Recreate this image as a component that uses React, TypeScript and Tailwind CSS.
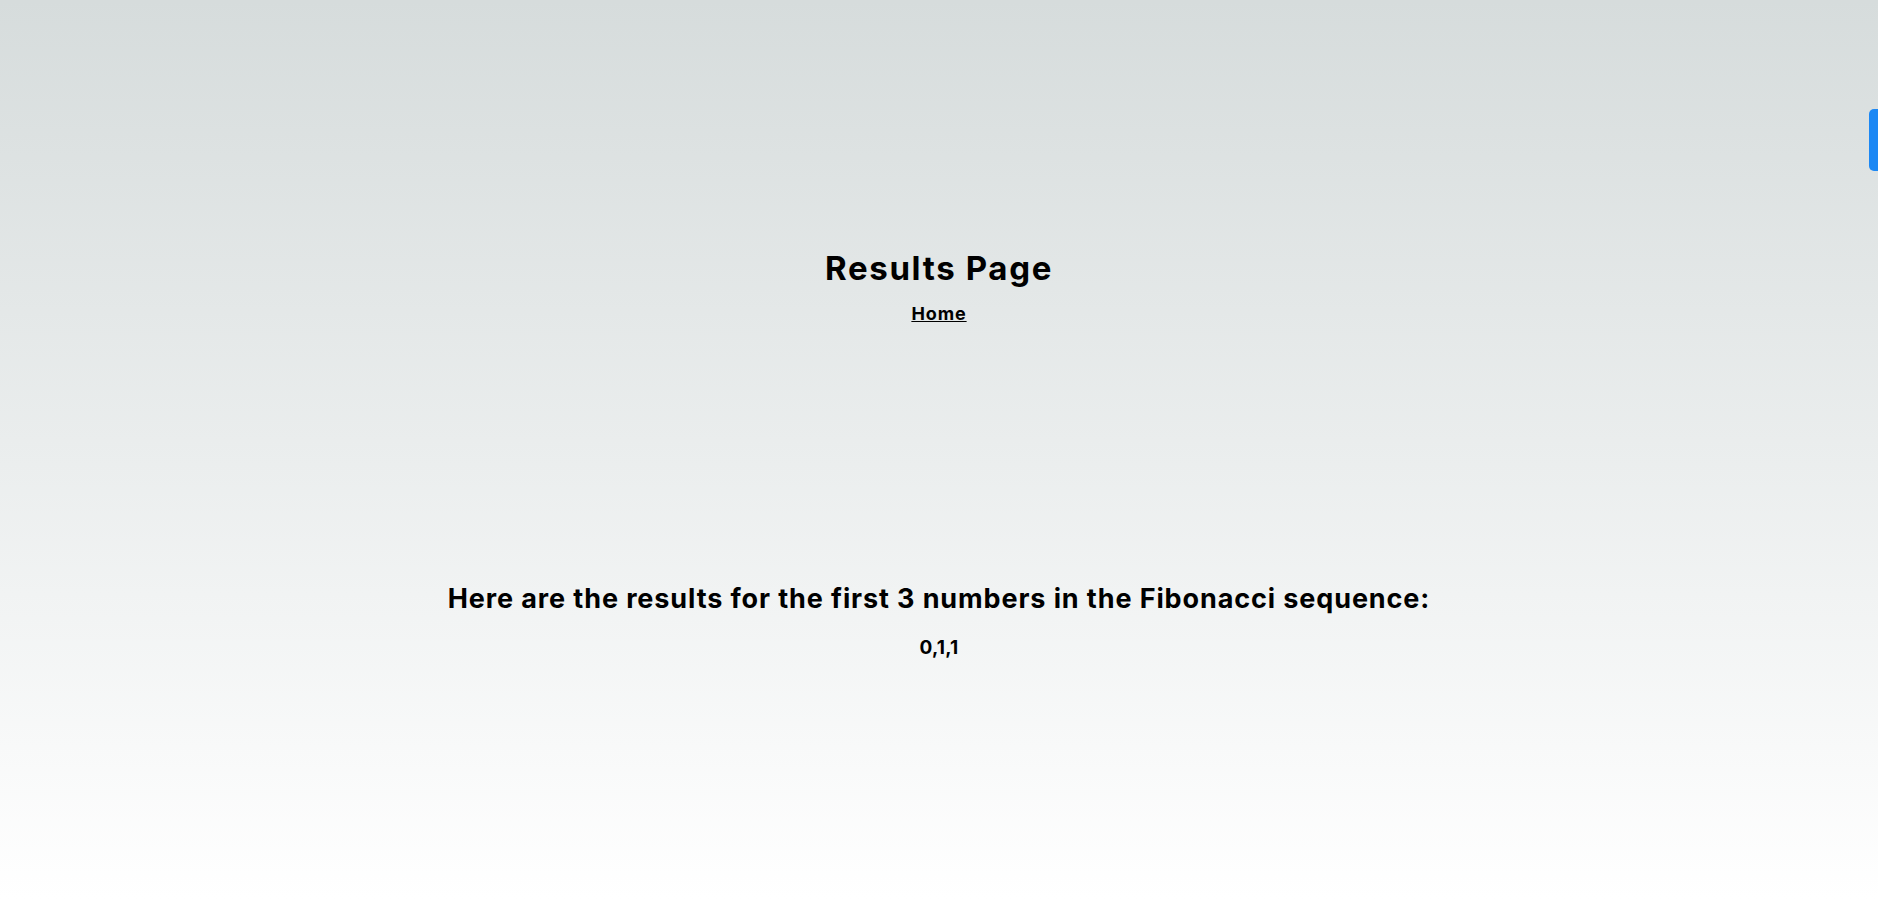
import React from 'react';

export default function App() {
  const fib = [0, 1, 1];

  return (
    <div className="relative min-h-[899px] w-full overflow-hidden bg-gradient-to-b from-[#d6dcdc] to-[#ffffff] font-['Inter',sans-serif] text-black">
      {/* side tab */}
      <div className="absolute right-0 top-[109px] h-[62px] w-[9px] rounded-l-[5px] bg-[#1c88f4]" />

      <header className="flex flex-col items-center pt-[248px]">
        <h1 className="text-[33px] font-bold leading-[40px] tracking-[0.05em]">Results Page</h1>
        <a href="#" className="mt-[14px] text-[18px] font-bold leading-[24px] tracking-[0.05em] underline">
          Home
        </a>
      </header>

      <main className="flex flex-col items-center pt-[256px]">
        <h2 className="text-[27px] font-bold leading-[34px] tracking-[0.033em]">
          Here are the results for the first 3 numbers in the Fibonacci sequence:
        </h2>
        <p className="mt-[20px] text-[19px] font-bold leading-[24px] tracking-[0.01em]">{fib.join(',')}</p>
      </main>
    </div>
  );
}
